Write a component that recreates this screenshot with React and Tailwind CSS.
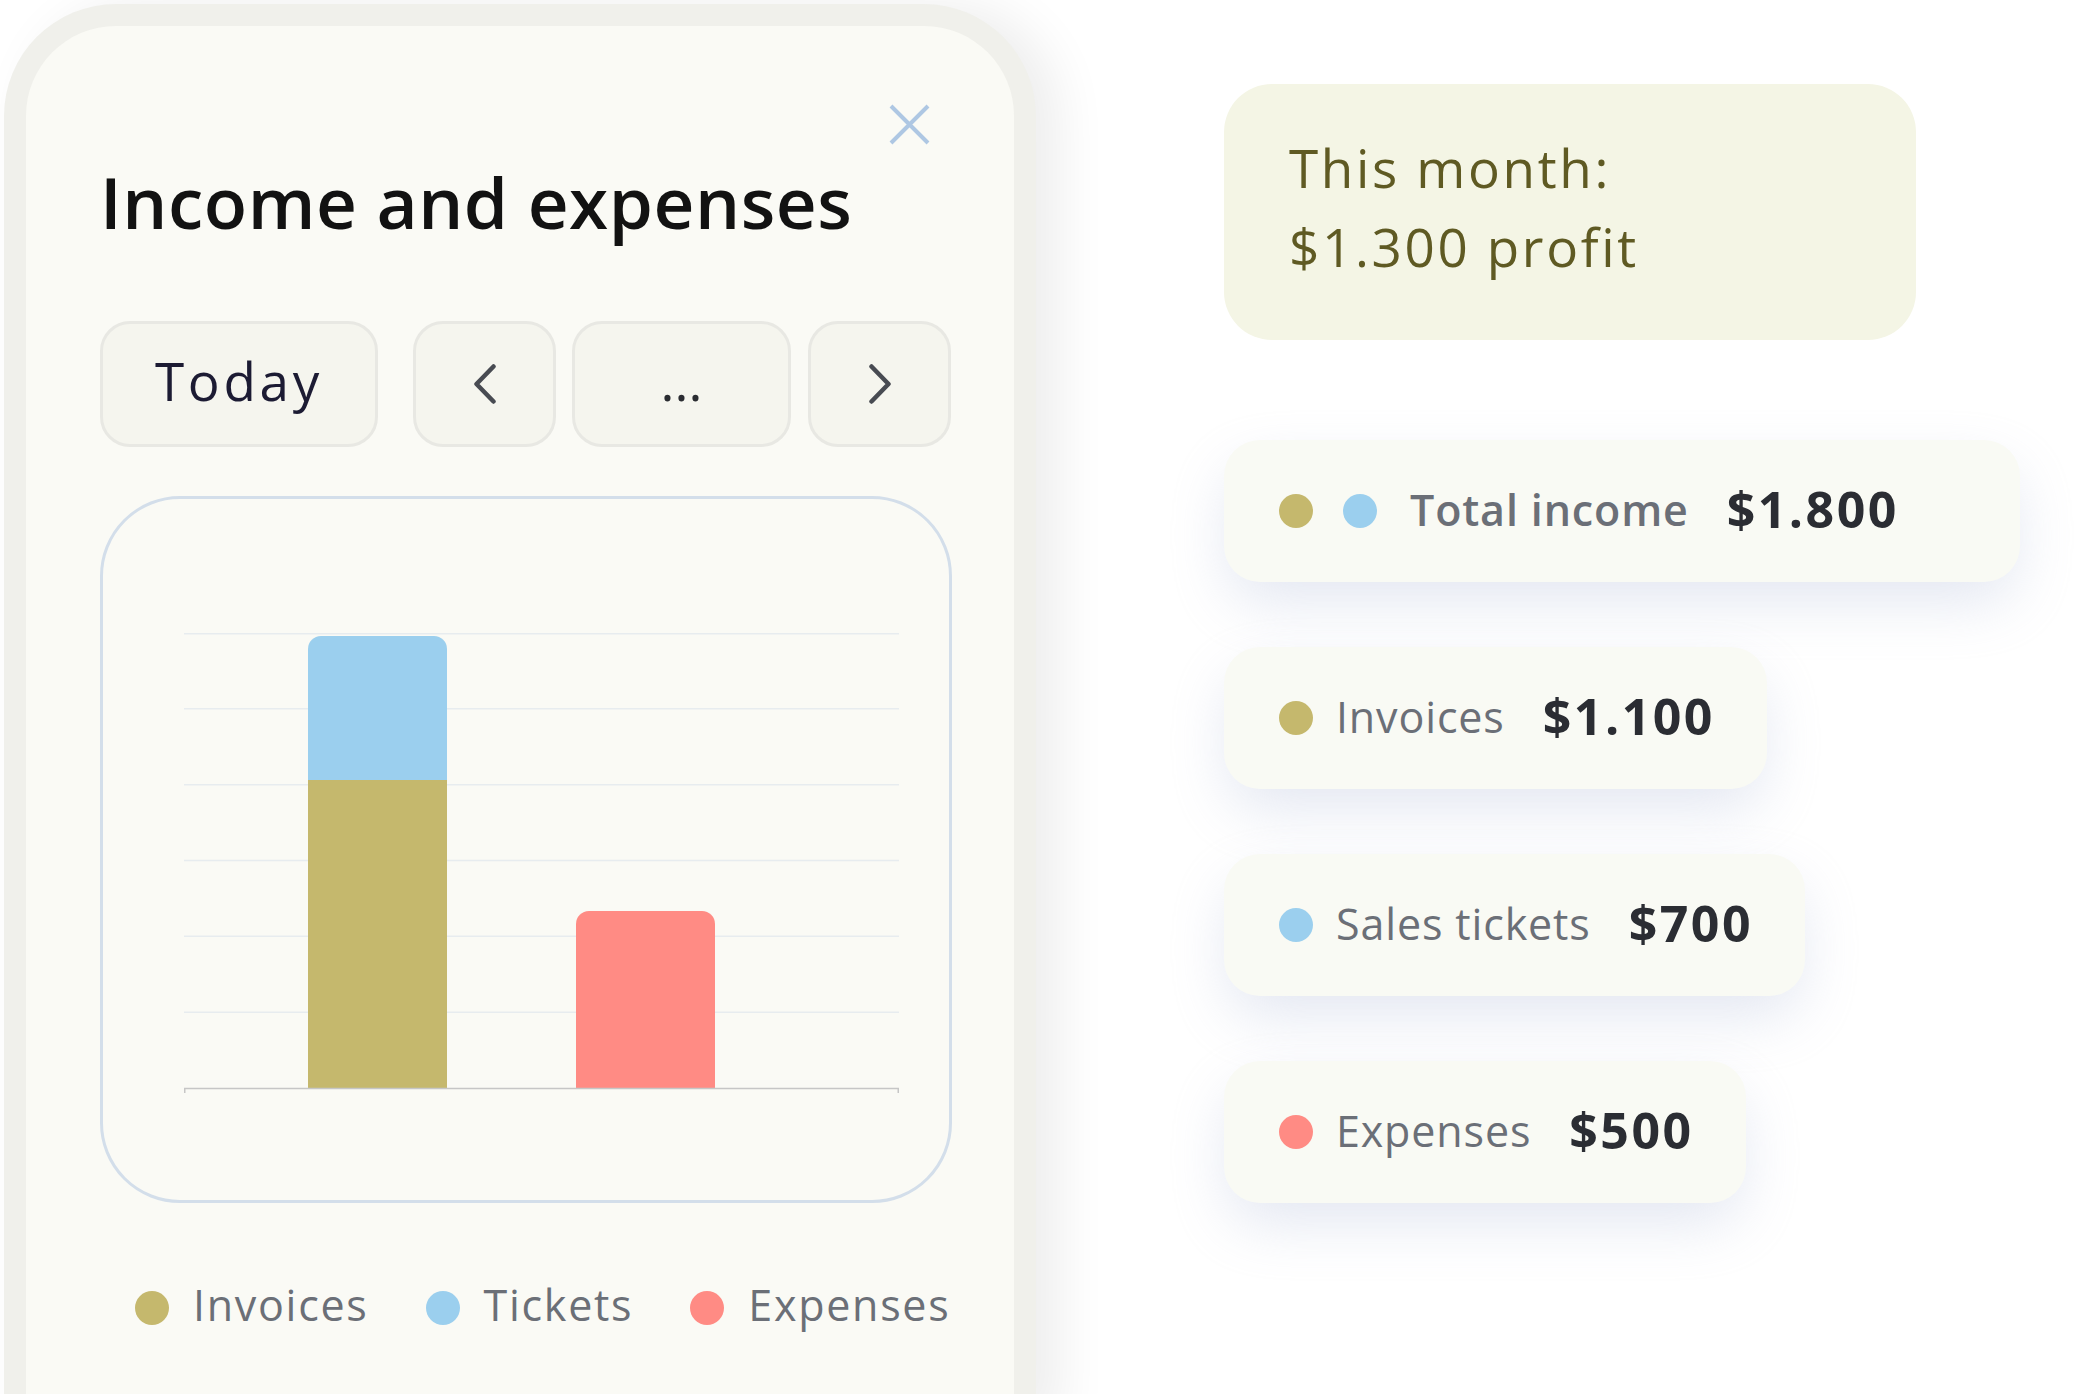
import React from "react";

const sans = "font-['Open_Sans',sans-serif]";

const OLIVE = "#c5b86d";
const BLUE = "#9bcfee";
const RED = "#ff8b84";

// bar with rounded top corners only
function barPath(x, y, w, bottom, r) {
  return `M${x} ${bottom} V${y + r} A${r} ${r} 0 0 1 ${x + r} ${y} H${x + w - r} A${r} ${r} 0 0 1 ${x + w} ${y + r} V${bottom} Z`;
}

function Chart() {
  const grid = [0.75, 75.8, 151.7, 227.5, 303.3, 379.2];
  return (
    <svg width="715" height="462" viewBox="0 0 715 462">
      {grid.map((y, i) => (
        <line key={i} x1="0" x2="715" y1={y} y2={y} stroke="#e7ecef" strokeWidth="1.5" />
      ))}
      <rect x="124" y="147" width="139" height="308" fill={OLIVE} />
      <path d={barPath(124, 3, 139, 147, 13)} fill={BLUE} />
      <path d={barPath(392, 278, 139, 455, 13)} fill={RED} />
      <line x1="0" x2="715" y1="455.5" y2="455.5" stroke="#c6c6c6" strokeWidth="1.5" />
      <line x1="0.75" x2="0.75" y1="455" y2="460" stroke="#c6c6c6" strokeWidth="1.5" />
      <line x1="714.25" x2="714.25" y1="455" y2="460" stroke="#c6c6c6" strokeWidth="1.5" />
    </svg>
  );
}

function Chevron({ dir }) {
  const d = dir === "left" ? "M20.5 2.5 L3.5 20 L20.5 37.5" : "M3.5 2.5 L20.5 20 L3.5 37.5";
  return (
    <svg width="24" height="40" viewBox="0 0 24 40" fill="none">
      <path d={d} stroke="#484b52" strokeWidth="4.5" strokeLinecap="round" strokeLinejoin="round" />
    </svg>
  );
}

function NavButton({ className, children }) {
  return (
    <div
      className={`h-[126px] flex items-center justify-center rounded-[30px] border-[3px] border-[#e8e8e3] bg-[#f5f5ee] ${className}`}
    >
      {children}
    </div>
  );
}

function Dot({ color, className = "" }) {
  return <span className={`block w-[34px] h-[34px] rounded-full shrink-0 ${className}`} style={{ backgroundColor: color }} />;
}

function LegendItem({ color, label }) {
  return (
    <div className="flex items-center gap-[24px]">
      <Dot color={color} className="mt-[6px]" />
      <span className="text-[43px] leading-none text-[#6b6f77] tracking-[0.04em]">{label}</span>
    </div>
  );
}

function StatCard({ dots, label, value, bold, className = "" }) {
  return (
    <div
      className={`h-[142px] pb-[4px] flex items-center pl-[55px] pr-[52px] rounded-[36px] bg-[#f9faf4] shadow-[0_24px_60px_-6px_rgba(190,200,225,0.45)] ${className}`}
    >
      <div className="flex items-center gap-[30px] mt-[4px]">
        {dots.map((c, i) => (
          <Dot key={i} color={c} />
        ))}
      </div>
      <span
        className={`text-[43px] leading-none text-[#6b6f77] tracking-[0.02em] ${bold ? "font-semibold ml-[33px]" : "ml-[23px]"}`}
      >
        {label}
      </span>
      <span className="ml-[38px] text-[50px] leading-none font-bold text-[#2b2d33] tracking-[0.05em]">{value}</span>
    </div>
  );
}

export default function App() {
  return (
    <div className={`w-[2098px] h-[1394px] overflow-hidden bg-white flex ${sans}`}>
      {/* phone */}
      <div className="ml-[4px] mt-[4px] w-[1032px] h-[1420px] shrink-0 rounded-t-[112px] bg-[#f0f0eb] px-[22px] pt-[22px] shadow-[24px_0_50px_rgba(0,0,0,0.07)]">
        <div className="h-full rounded-t-[90px] bg-[#fafaf5] pl-[74px] pr-[62px] pt-[78px] flex flex-col">
          <div className="flex justify-end pr-[22px]">
            <svg width="41" height="41" viewBox="0 0 41 41">
              <path d="M2 2 L39 39 M39 2 L2 39" stroke="#aec7e3" strokeWidth="4" />
            </svg>
          </div>

          <h1 className="mt-[21px] text-[71px] leading-none font-semibold text-[#121212] tracking-[0.008em]">
            Income and expenses
          </h1>

          <div className="mt-[84px] flex">
            <NavButton className="w-[278px] pb-[8px]">
              <span className="text-[53px] leading-none text-[#1c1b33] tracking-[0.07em]">Today</span>
            </NavButton>
            <NavButton className="ml-[35px] w-[143px]">
              <Chevron dir="left" />
            </NavButton>
            <NavButton className="ml-[16px] w-[219px] pb-[8px]">
              <span className="text-[53px] leading-none text-[#2a2c31]">...</span>
            </NavButton>
            <NavButton className="ml-[17px] w-[143px]">
              <Chevron dir="right" />
            </NavButton>
          </div>

          <div className="mt-[49px] h-[707px] rounded-[80px] border-[3px] border-[#d3deea] pl-[81px] pt-[134px]">
            <Chart />
          </div>

          <div className="mt-[80px] ml-[35px] flex items-center gap-[57px]">
            <LegendItem color={OLIVE} label="Invoices" />
            <LegendItem color={BLUE} label="Tickets" />
            <LegendItem color={RED} label="Expenses" />
          </div>
        </div>
      </div>

      {/* summary */}
      <div className="ml-[188px] pt-[84px] flex flex-col items-start">
        <div className="w-[692px] h-[256px] rounded-[48px] bg-[#f4f5e5] pl-[65px] pt-[44px] text-[53px] leading-[79px] font-medium text-[#5f5a23] tracking-[0.05em]">
          <div>This month:</div>
          <div>$1.300 profit</div>
        </div>

        <div className="mt-[100px] flex flex-col items-start gap-[65px]">
          <StatCard dots={[OLIVE, BLUE]} label="Total income" value="$1.800" bold className="w-[796px]" />
          <StatCard dots={[OLIVE]} label="Invoices" value="$1.100" />
          <StatCard dots={[BLUE]} label="Sales tickets" value="$700" />
          <StatCard dots={[RED]} label="Expenses" value="$500" />
        </div>
      </div>
    </div>
  );
}
